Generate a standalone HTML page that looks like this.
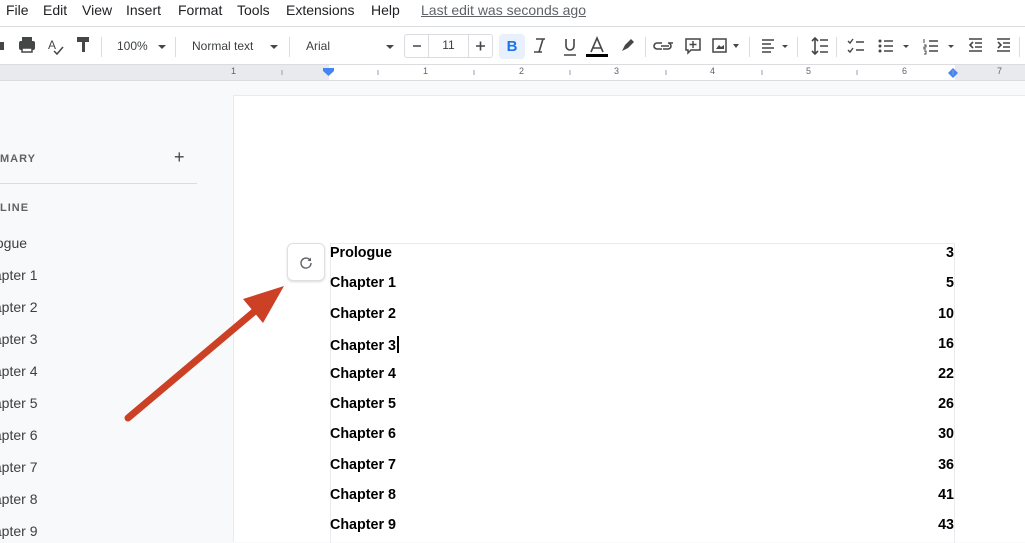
<!DOCTYPE html>
<html><head><meta charset="utf-8"><style>
*{margin:0;padding:0;box-sizing:border-box}
body{width:1025px;height:542px;overflow:hidden;background:#f8f9fa;font-family:"Liberation Sans",Arial,sans-serif;position:relative;color:#202124}
.abs{position:absolute;white-space:nowrap}
.menu{top:0;left:0;width:1025px;height:26px;background:#fff}
.menu span{position:absolute;top:2px;font-size:14px;color:#202124}
.tb{top:26px;left:0;width:1025px;height:39px;background:#fff;border-top:1px solid #dadce0;border-bottom:1px solid #dadce0}
.sep{position:absolute;top:10px;width:1px;height:20px;background:#dadce0}
.tt{position:absolute;font-size:12px;color:#3c4043;top:12px}
.ruler{top:65px;left:0;width:1025px;height:16px;background:#fff;border-bottom:1px solid #dadce0}
.rn{position:absolute;top:1px;font-size:9px;color:#5f6368}
.side{position:absolute;left:-24px;font-size:14px;color:#3c4043}
.row{position:absolute;left:330px;width:624px;font-size:14.3px;font-weight:bold;color:#000}
.row b{position:absolute;right:0}
</style></head><body>
<div class="abs menu">
<span style="left:6px">File</span><span style="left:43px">Edit</span><span style="left:82px">View</span><span style="left:126px">Insert</span><span style="left:178px">Format</span><span style="left:237px">Tools</span><span style="left:286px">Extensions</span><span style="left:371px">Help</span>
<span style="left:421px;color:#5f6368;text-decoration:underline">Last edit was seconds ago</span>
</div>
<div class="abs tb">
<svg width="1025" height="38" style="position:absolute;left:0;top:0" fill="#444746" stroke="#444746">
<path d="M-2 15h6v8h-6z" stroke="none"/>
<rect x="19" y="14" width="16" height="9" rx="2" stroke="none"/><rect x="22" y="10" width="10" height="4" stroke="none"/><rect x="22" y="21" width="10" height="4" fill="#fff" stroke="#444746" stroke-width="1.5"/>
<text x="48" y="22" font-size="12" stroke="none" font-family="Liberation Sans">A</text><path d="M54 24l3 3 6-7" fill="none" stroke-width="1.5"/>
<rect x="77" y="10" width="12" height="5" stroke="none"/><rect x="82" y="15" width="3" height="10" stroke="none"/>
<path d="M158 18l4 4 4-4z" stroke="none"/><path d="M270 18l4 4 4-4z" stroke="none"/><path d="M386 18l4 4 4-4z" stroke="none"/>
<path d="M413 19h8M476 19h9M480.5 14.5v9" stroke-width="1.6" fill="none"/>
<path d="M543 12l-4 13M536 12h9M534 25h8" fill="none" stroke-width="1.6"/>
<path d="M566 12v7a4 4 0 0 0 8 0v-7M564 28h12" fill="none" stroke-width="1.6"/>
<path d="M591 25l6-14 6 14M593 21h8" fill="none" stroke-width="1.6"/><rect x="586" y="27" width="22" height="3" fill="#000" stroke="none"/>
<path d="M622 24l3-6 6-6 3 3-6 6z" stroke="none"/>
<path d="M657 16h5M668 16h5M662 22h-5a3 3 0 0 1 0-6M668 16a3 3 0 0 1 0 6h-5M661 19h8" fill="none" stroke-width="1.6"/>
<path d="M686 12h14v11h-9l-3 3v-3h-2z" fill="none" stroke-width="1.5"/><path d="M693 14v7M689.5 17.5h7" stroke-width="1.4"/>
<rect x="713" y="12" width="13" height="13" fill="none" stroke-width="1.5"/><path d="M716 22l3-4 2 2 3-2v4z" stroke="none"/><path d="M733 17l3 4 3-4z" stroke="none"/>
<path d="M762 13h12M762 17h9M762 21h12M762 25h9" stroke-width="1.6"/><path d="M782 18l3 3 3-3z" stroke="none"/>
<path d="M815 11v16M812 14l3-3 3 3M812 24l3 3 3-3M820 13h8M820 19h8M820 25h8" fill="none" stroke-width="1.6"/>
<path d="M848 14l2 2 3-4M848 23l2 2 3-4M856 15h8M856 23h8" fill="none" stroke-width="1.4"/>
<circle cx="880" cy="14" r="1.5" stroke="none"/><circle cx="880" cy="19" r="1.5" stroke="none"/><circle cx="880" cy="24" r="1.5" stroke="none"/><path d="M884 14h9M884 19h9M884 24h9" stroke-width="1.6"/><path d="M903 18l3 3 3-3z" stroke="none"/>
<path d="M929 14h9M929 19h9M929 24h9" stroke-width="1.6"/><path d="M924 12v4M924 18h2v2h-2v2h2M924 24h2v3h-2" fill="none" stroke-width="1"/><path d="M948 18l3 3 3-3z" stroke="none"/>
<path d="M969 12h13M975 16h7M975 20h7M969 24h13M973 15l-3 3 3 3" fill="none" stroke-width="1.6"/>
<path d="M997 12h13M1003 16h7M1003 20h7M997 24h13M998 15l3 3-3 3" fill="none" stroke-width="1.6"/>
</svg>
<div class="sep" style="left:101px"></div><div class="sep" style="left:175px"></div><div class="sep" style="left:289px"></div><div class="sep" style="left:645px"></div><div class="sep" style="left:749px"></div><div class="sep" style="left:797px"></div><div class="sep" style="left:836px"></div><div class="sep" style="left:1019px"></div>
<span class="tt" style="left:117px">100%</span><span class="tt" style="left:192px">Normal text</span><span class="tt" style="left:306px">Arial</span>
<div style="position:absolute;left:404px;top:7px;width:89px;height:24px;border:1px solid #dadce0;border-radius:3px"></div>
<div style="position:absolute;left:428px;top:7px;width:41px;height:24px;border-left:1px solid #dadce0;border-right:1px solid #dadce0;font-size:12px;text-align:center;line-height:23px;color:#3c4043">11</div>
<div style="position:absolute;left:499px;top:7px;width:26px;height:25px;background:#e8f0fe;border-radius:4px;color:#1a73e8;font-weight:bold;font-size:15px;text-align:center;line-height:25px">B</div>
</div>
<div class="abs ruler">
<div style="position:absolute;left:0;top:0;width:329px;height:15px;background:#e8eaed"></div>
<div style="position:absolute;left:955px;top:0;width:70px;height:15px;background:#e8eaed"></div>
<span class="rn" style="left:231px">1</span><span class="rn" style="left:423px">1</span><span class="rn" style="left:519px">2</span><span class="rn" style="left:614px">3</span><span class="rn" style="left:710px">4</span><span class="rn" style="left:806px">5</span><span class="rn" style="left:902px">6</span><span class="rn" style="left:997px">7</span>
<svg width="1025" height="16" style="position:absolute;left:0;top:0"><path d="M323 3h11v3l-5.5 5-5.5-5z" fill="#4285f4"/><path d="M953 3l5 5-5 5-5-5z" fill="#4285f4"/>
<g stroke="#9aa0a6"><path d="M282 5v5M378 5v5M474 5v5M570 5v5M666 5v5M762 5v5M857 5v5M953 5v5"/></g></svg>
</div>
<div style="position:absolute;left:233px;top:95px;width:792px;height:447px;background:#fff;border-left:1px solid #e8eaed;border-top:1px solid #e8eaed"></div>
<div class="abs" style="left:0;top:153px;font-size:11px;letter-spacing:1px;color:#5f6368;font-weight:bold">MARY</div>
<div class="abs" style="left:174px;top:147px;font-size:18px;color:#444746">+</div>
<div style="position:absolute;left:0;top:183px;width:197px;height:1px;background:#dadce0"></div>
<div class="abs" style="left:0;top:202px;font-size:11px;letter-spacing:1px;color:#5f6368;font-weight:bold">LINE</div>
<div class="side" style="left:-29px;top:235px">Prologue</div>
<div class="side" style="top:267px">Chapter 1</div><div class="side" style="top:299px">Chapter 2</div><div class="side" style="top:331px">Chapter 3</div><div class="side" style="top:363px">Chapter 4</div><div class="side" style="top:395px">Chapter 5</div><div class="side" style="top:427px">Chapter 6</div><div class="side" style="top:459px">Chapter 7</div><div class="side" style="top:491px">Chapter 8</div><div class="side" style="top:523px">Chapter 9</div>
<div style="position:absolute;left:330px;top:243px;width:625px;height:300px;border-top:1px solid #e8eaed;border-left:1px solid #e8eaed;border-right:1px solid #e8eaed"></div>
<div class="row" style="top:245px">Prologue<b>3</b></div>
<div class="row" style="top:275px">Chapter 1<b>5</b></div>
<div class="row" style="top:306px">Chapter 2<b>10</b></div>
<div class="row" style="top:336px">Chapter 3<span style="border-left:2px solid #000;margin-left:1px;height:17px;display:inline-block;vertical-align:-3px"></span><b>16</b></div>
<div class="row" style="top:366px">Chapter 4<b>22</b></div>
<div class="row" style="top:396px">Chapter 5<b>26</b></div>
<div class="row" style="top:426px">Chapter 6<b>30</b></div>
<div class="row" style="top:457px">Chapter 7<b>36</b></div>
<div class="row" style="top:487px">Chapter 8<b>41</b></div>
<div class="row" style="top:517px">Chapter 9<b>43</b></div>
<div style="position:absolute;left:287px;top:243px;width:38px;height:38px;background:#fff;border:1px solid #e0e0e0;border-radius:6px;box-shadow:0 1px 2px rgba(0,0,0,.15)"></div>
<svg width="1025" height="542" style="position:absolute;left:0;top:0">
<path d="M311 263a5 5 0 1 1-1.5-3.5" fill="none" stroke="#5f6368" stroke-width="1.4"/><path d="M311 257.5v3.5h-3.5z" fill="#5f6368"/>
<path d="M128 418L262 305" stroke="#cc4125" stroke-width="7" stroke-linecap="round"/>
<path d="M284 286L243 299L263 323Z" fill="#cc4125"/>
</svg>
</body></html>
